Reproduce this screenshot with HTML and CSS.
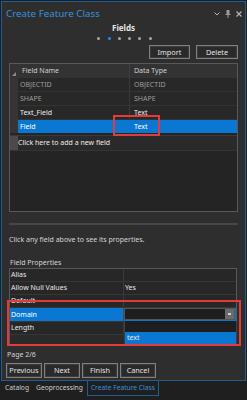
FILE: index.html
```html
<!doctype html>
<html>
<head>
<meta charset="utf-8">
<title>Create Feature Class</title>
<link rel="stylesheet" href="styles.css">
</head>
<body>
<div class="pane">
  <div class="titlebar">
    <span class="title">Create Feature Class</span>
    <span class="title-icons">
      <svg width="6" height="4" viewBox="0 0 6 4"><polyline points="0.5,0.5 3,3 5.5,0.5" fill="none" stroke="#b5b5b5" stroke-width="1"/></svg>
      <svg width="6" height="8" viewBox="0 0 6 8"><rect x="1.5" y="0" width="3" height="4.5" fill="#9a9a9a"/><line x1="0.5" y1="4.5" x2="5.5" y2="4.5" stroke="#9a9a9a"/><line x1="3" y1="4.5" x2="3" y2="8" stroke="#9a9a9a"/></svg>
      <svg width="6" height="6" viewBox="0 0 6 6"><path d="M0.5 0.5 L5.5 5.5 M5.5 0.5 L0.5 5.5" stroke="#b5b5b5" stroke-width="1.1"/></svg>
    </span>
  </div>

  <div class="step-title">Fields</div>
  <div class="dots">
    <span class="dot"></span><span class="dot on"></span><span class="dot"></span><span class="dot"></span><span class="dot"></span><span class="dot"></span>
  </div>

  <div class="toolbar">
    <button class="btn import">Import</button>
    <button class="btn delete">Delete</button>
  </div>

  <div class="grid">
    <div class="row head">
      <div class="rh"><span class="corner"></span></div>
      <div class="c1">Field Name</div>
      <div class="c2">Data Type</div>
    </div>
    <div class="row dim"><div class="rh"></div><div class="c1">OBJECTID</div><div class="c2">OBJECTID</div></div>
    <div class="row dim"><div class="rh"></div><div class="c1">SHAPE</div><div class="c2">SHAPE</div></div>
    <div class="row"><div class="rh"></div><div class="c1">Text_Field</div><div class="c2">Text</div></div>
    <div class="row sel"><div class="rh"></div><div class="c1">Field</div><div class="c2">Text</div></div>
    <div class="row newrow"><div class="rh"></div><div class="c-new">Click here to add a new field</div></div>
    <div class="filler"></div>
    <div class="mark mark-cell"></div>
  </div>

  <div class="sep"></div>

  <div class="hint">Click any field above to see its properties.</div>
  <div class="props-label">Field Properties</div>

  <div class="props">
    <div class="prow"><div class="pk">Alias</div><div class="pv"></div></div>
    <div class="prow"><div class="pk">Allow Null Values</div><div class="pv">Yes</div></div>
    <div class="prow"><div class="pk">Default</div><div class="pv"></div></div>
    <div class="prow sel"><div class="pk">Domain</div><div class="pv"><div class="combo"><span class="combo-btn"></span></div></div></div>
    <div class="prow"><div class="pk">Length</div><div class="pv"></div></div>
    <div class="list">
      <div class="item"></div>
      <div class="item on">text</div>
    </div>
    <div class="mark mark-props"></div>
  </div>

  <div class="page">Page 2/6</div>
  <div class="nav">
    <button class="btn nb">Previous</button>
    <button class="btn nb">Next</button>
    <button class="btn nb">Finish</button>
    <button class="btn nb">Cancel</button>
  </div>
</div>

<div class="tabs">
  <span class="tab">Catalog</span>
  <span class="tab">Geoprocessing</span>
  <span class="tab active">Create Feature Class</span>
</div>
</body>
</html>
```

FILE: styles.css
```css
/* Pane layout */

body {
    margin: 0;
    background: #1f1f1f;
    font-family: "Noto Sans", "Open Sans", sans-serif;
    font-size: 7px;
    color: #d4d4d4;
}

.pane {
    margin: 1px 1px 0 1px;
    height: 378px;
    border: 1px solid #1f5d95;
    background: #2e2e2e;
    display: flex;
    flex-direction: column;
}

.titlebar {
    height: 21px;
    display: flex;
    align-items: center;
    justify-content: space-between;
    padding: 0 3px 0 4px;
}

.title {
    color: #3a8fdc;
    font-size: 9.8px;
    padding-top: 2px;
}

.title-icons {
    display: flex;
    align-items: center;
    gap: 5px;
    padding-top: 2px;
}

.step-title {
    height: 9px;
    line-height: 9px;
    text-align: center;
    font-weight: bold;
    font-size: 8px;
    color: #e4e4e4;
}

.dots {
    margin-top: 5px;
    height: 3px;
    display: flex;
    justify-content: center;
    gap: 7.3px;
    padding-left: 2px;
}

.dot {
    width: 3px;
    height: 3px;
    border-radius: 50%;
    background: #a8a8a8;
}

.dot.on {
    background: #1e8ef0;
}

.btn {
    font-family: inherit;
    font-size: 7.3px;
    color: #e2e2e2;
    background: #2a2a2a;
    border: 1px solid #808080;
    box-shadow: inset 0 0 0 1px #3c3c3c;
    height: 14px;
    padding: 0;
    line-height: 11px;
}

.toolbar {
    margin-top: 5px;
    display: flex;
    justify-content: flex-end;
    gap: 6px;
    padding-right: 7px;
}

.import { width: 41px; }
.delete { width: 42px; }

/* Field grid */

.grid {
    position: relative;
    margin: 4px 7px 0 7px;
    height: 147px;
    border: 1px solid #585858;
    background: #242424;
    display: flex;
    flex-direction: column;
}

.row {
    display: flex;
    height: 13px;
    line-height: 13px;
    border-bottom: 1px solid #343434;
    background: #282828;
    color: #ececec;
    flex-shrink: 0;
}

.row .rh {
    width: 8px;
    background: #353535;
    flex-shrink: 0;
}

.row .c1 {
    width: 109px;
    padding-left: 2px;
    border-right: 1px solid #3a3a3a;
    white-space: nowrap;
    overflow: hidden;
}

.row .c2 {
    flex: 1;
    padding-left: 4px;
}

.row.head {
    height: 14px;
    line-height: 14px;
    background: #333;
    color: #cfcfcf;
    border-bottom: 0;
}

.row.head .rh {
    background: #333;
    position: relative;
}

.corner {
    position: absolute;
    left: 2px;
    bottom: 2px;
    width: 0;
    height: 0;
    border-left: 4px solid transparent;
    border-bottom: 4px solid #8a8a8a;
}

.row.head .c1 {
    padding-left: 4px;
    width: 107px;
    border-right: 1px solid #3e3e3e;
}

.row.head .c2 {
    padding-left: 4px;
}

.row.dim {
    color: #9c9c9c;
}

.row.sel {
    background: #0a78d2;
    color: #fff;
    border-bottom: 1px solid #262626;
}

.row.sel .c1 {
    border-right-color: #0a78d2;
}

.row.newrow {
    margin-top: 1px;
    height: 14px;
    line-height: 14px;
    background: #2a2a2a;
    border-top: 1px solid #3a3a3a;
}

.row.newrow .rh {
    background: #4a4a4a;
}

.filler {
    flex: 1;
    background: #242424;
}

/* Annotation boxes */

.mark {
    position: absolute;
    border: 2px solid #e23b3b;
    pointer-events: none;
}

.mark-cell {
    left: 103px;
    top: 51px;
    width: 43px;
    height: 17px;
}

.sep {
    margin: 11px 7px 0 7px;
    height: 2px;
    background: #474747;
}

.hint {
    margin-top: 10px;
    line-height: 10px;
    padding-left: 7px;
}

.props-label {
    margin-top: 13px;
    line-height: 10px;
    padding-left: 8px;
}

/* Property grid */

.props {
    position: relative;
    margin: 0 8px 0 7px;
    height: 75px;
    border: 1px solid #585858;
    background: #2a2a2a;
}

.prow {
    display: flex;
    height: 12px;
    line-height: 12px;
    border-bottom: 1px solid #363636;
    background: #272727;
    color: #e8e8e8;
}

.prow .pk {
    width: 112px;
    padding-left: 1px;
    border-right: 1px solid #3a3a3a;
    white-space: nowrap;
}

.prow .pv {
    flex: 1;
    padding-left: 1px;
    position: relative;
}

.prow.sel {
    height: 13px;
    line-height: 13px;
    background: #0a78d2;
    color: #fff;
}

.prow.sel .pk {
    border-right: 1px solid #4a4a4a;
}

.combo {
    position: absolute;
    left: 0;
    top: 0;
    right: 1px;
    height: 12px;
    background: #1e1e1e;
    border: 1px solid #555;
    box-sizing: border-box;
}

.combo-btn {
    position: absolute;
    right: 0;
    top: 0;
    bottom: 0;
    width: 9px;
    background: #6a6a6a;
}

.combo-btn::after {
    content: "";
    position: absolute;
    left: 3px;
    top: 4px;
    width: 3px;
    height: 2px;
    background: #d0d0d0;
}

.list {
    position: absolute;
    left: 114px;
    top: 52px;
    width: 111px;
    background: #1e1e1e;
    border: 1px solid #3e3e3e;
    border-top: 0;
}

.list .item {
    height: 11px;
    line-height: 11px;
    padding-left: 2px;
    color: #e8e8e8;
}

.list .item.on {
    height: 12px;
    line-height: 12px;
    background: #0a78d2;
}

.mark-props {
    left: -3px;
    top: 31px;
    width: 230px;
    height: 42px;
}

.page {
    margin-top: 5px;
    line-height: 10px;
    padding-left: 5px;
}

.nav {
    margin-top: 3px;
    display: flex;
    gap: 2px;
    padding-left: 4px;
}

.nb {
    width: 36px;
    height: 15px;
}

/* Dock tabs */

.tabs {
    display: flex;
    height: 15px;
    line-height: 14px;
    padding-left: 5px;
    color: #cfcfcf;
    font-size: 6.7px;
}

.tab {
    margin-right: 7px;
}

.tab.active {
    margin-left: -3px;
    padding: 0 3px;
    color: #3a8fdc;
    border: 1px solid #1f5d95;
    border-top: 0;
}
```
